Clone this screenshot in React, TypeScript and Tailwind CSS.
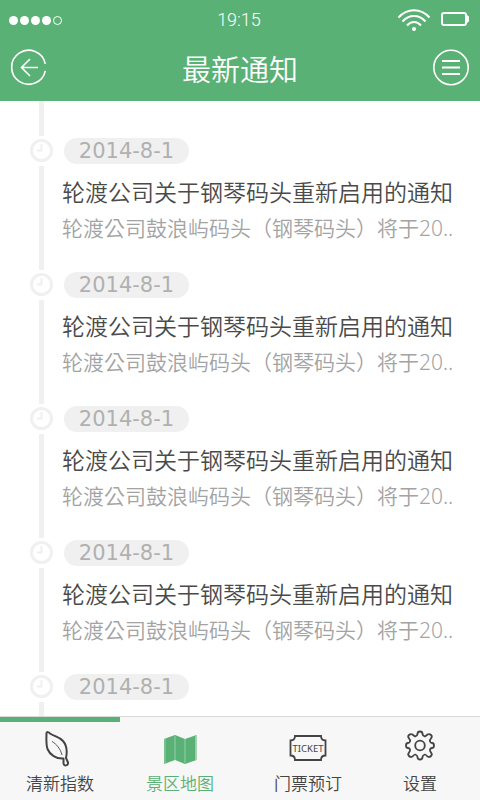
import type { ReactNode } from "react";

type Notice = { id: number; date: string; title?: string; summary?: string };

const title = "轮渡公司关于钢琴码头重新启用的通知";
const summary = "轮渡公司鼓浪屿码头（钢琴码头）将于20..";

const notices: Notice[] = [
  { id: 1, date: "2014-8-1", title, summary },
  { id: 2, date: "2014-8-1", title, summary },
  { id: 3, date: "2014-8-1", title, summary },
  { id: 4, date: "2014-8-1", title, summary },
  { id: 5, date: "2014-8-1" },
];

function StatusBar() {
  return (
    <div className="grid h-10 grid-cols-3 items-center pr-[11px] pl-[9px]">
      <div className="flex gap-[2px]" role="img" aria-label="信号">
        <span className="size-[9px] rounded-full bg-white" />
        <span className="size-[9px] rounded-full bg-white" />
        <span className="size-[9px] rounded-full bg-white" />
        <span className="size-[9px] rounded-full bg-white" />
        <span className="size-[9px] rounded-full border border-white" />
      </div>
      <time className="text-center font-['Roboto',sans-serif] text-lg font-[350]">19:15</time>
      <div className="flex items-center justify-end gap-[10px]">
        <svg width="34" height="24" viewBox="0 0 34 24" fill="none" stroke="currentColor" strokeWidth="2" role="img" aria-label="无线网络">
          <path d="M1.5 9.5C10 -0.3 24 -0.3 32.500 9.500" />
          <path d="M5.500 13.500C12 6 22 6 28.500 13.500" />
          <path d="M10 17.500C14 12.800 20 12.800 24 17.500" />
          <circle cx="17" cy="21" r="2" fill="currentColor" stroke="none" />
        </svg>
        <svg width="28" height="16" viewBox="0 0 28 16" fill="none" role="img" aria-label="电池">
          <rect x="1" y="1" width="24" height="12" rx="2" stroke="currentColor" strokeWidth="2" />
          <path d="M26 3L28 4.500V9.500L26 11Z" fill="currentColor" />
        </svg>
      </div>
    </div>
  );
}

function Header() {
  return (
    <header className="shrink-0 bg-[#5ab175] text-white">
      <StatusBar />
      <div className="flex h-[61px] items-start justify-between px-[10px] pt-[9px]">
        <button type="button" aria-label="返回">
          <svg width="38" height="38" viewBox="0 0 38 38" fill="none" stroke="currentColor" strokeWidth="1.600">
            <path d="M35.300 14.800A17 17 0 1 0 35.300 21.800" />
            <path d="M28 18.500H11.500M20 10L11.500 18.500L20 27" />
          </svg>
        </button>
        <h1 className="text-[29px] leading-[42px] font-[350]">最新通知</h1>
        <button type="button" aria-label="菜单">
          <svg width="38" height="38" viewBox="0 0 38 38" fill="none" stroke="currentColor" strokeWidth="1.600">
            <circle cx="19" cy="18.500" r="17.200" />
            <path d="M10 12H28M10 18.500H28M10 25H28" strokeWidth="2" />
          </svg>
        </button>
      </div>
    </header>
  );
}

function NoticeItem({ notice }: { notice: Notice }) {
  return (
    <li className="flex min-h-[134px] gap-2">
      <div className="flex w-6 shrink-0 flex-col">
        <svg width="24" height="30" viewBox="0 0 24 30" fill="none" stroke="#f0f0f0" aria-hidden="true">
          <circle cx="11.500" cy="14.500" r="10" strokeWidth="3" />
          <path d="M11.500 8V14.500H7" strokeWidth="2" />
        </svg>
        <span className="ml-[9px] w-[5px] grow bg-[#f0f0f0]" />
      </div>
      <article className="min-w-0 grow pt-[2px]">
        <time className="ml-[2px] block w-[125px] rounded-full bg-[#f0f0f0] text-center font-['DejaVu_Sans',sans-serif] text-[21px] leading-[26px] text-[#b0b0b0]">
          {notice.date}
        </time>
        {notice.title && (
          <h2 className="mt-3 text-[23px] leading-8 font-[350] whitespace-nowrap text-[#4a4a4a]">{notice.title}</h2>
        )}
        {notice.summary && (
          <p
            lang="zh-TW"
            className="mt-1 font-['Noto_Sans','Noto_Sans_CJK_TC',sans-serif] text-[21px] leading-8 font-[350] whitespace-nowrap text-[#a3a3a3]"
          >
            {notice.summary}
          </p>
        )}
      </article>
    </li>
  );
}

function Tab({ label, active = false, children }: { label: string; active?: boolean; children: ReactNode }) {
  return (
    <a
      href="#"
      aria-current={active ? "page" : undefined}
      className={`flex flex-col items-center pt-[5px] ${active ? "text-[#5ab175]" : "text-[#444]"}`}
    >
      {children}
      <span className="mt-[5px] text-[17px] leading-6 font-[350]">{label}</span>
    </a>
  );
}

function TabBar() {
  return (
    <nav className="shrink-0 border-t border-[#d9d9d9] bg-[#f7f7f7]">
      <div className="h-[5px] w-1/4 bg-[#5ab175]" />
      <div className="grid h-[78px] grid-cols-[15fr_15fr_17fr_11fr] pr-4">
        <Tab label="清新指数">
          <svg width="38" height="40" viewBox="0 0 38 40" fill="none" stroke="currentColor" aria-hidden="true">
            <path
              d="M5.500 6C6 4.500 7.500 5 9 6.500C13 9.500 18 9.500 22 14C25.500 18 26.500 24 25 31L27 35.500C27.500 39 22.500 39.500 22.500 36L22.500 31.500C15 32 9 28 6.500 22C4.800 17 5.500 11 5.500 6Z"
              strokeWidth="2"
              strokeLinejoin="round"
            />
            <path d="M11 14.500C15.500 17 19.500 22 21 28" strokeWidth="0.900" />
          </svg>
        </Tab>
        <Tab label="景区地图" active>
          <svg width="34" height="40" viewBox="0 0 34 40" aria-hidden="true">
            <path d="M1 12L12 8L22 12L33.500 8V33L22 37L12 33L1 37Z" fill="currentColor" />
            <path d="M2 12V36M12 9V33M22 12V36M32.500 9V33" stroke="#a7d5b4" strokeWidth="0.800" />
          </svg>
        </Tab>
        <Tab label="门票预订">
          <svg width="38" height="40" viewBox="0 0 38 40" fill="none" stroke="currentColor" aria-hidden="true">
            <path d="M6 9H32C32 12 33.500 13.500 36.500 13.500V28.500C33.500 28.500 32 30 32 33H6C6 30 4.500 28.500 1.500 28.500V13.500C4.500 13.500 6 12 6 9Z" strokeWidth="1.800" />
            <text x="19" y="25" textAnchor="middle" fontSize="9.500" fontFamily="Noto Sans, sans-serif" fill="currentColor" stroke="none">
              TICKET
            </text>
          </svg>
        </Tab>
        <Tab label="设置">
          <svg width="34" height="40" viewBox="0 0 34 40" fill="none" stroke="currentColor" strokeWidth="1.800" strokeLinejoin="round" aria-hidden="true">
            <g transform="translate(0 -1)">
              <path d="M14.500 8Q14.500 5.500 17 5.500Q19.500 5.500 19.500 8Q19.800 10 21.800 10.500Q23.500 9.500 24.500 8.500Q26.500 7.500 28 9Q29.500 10.500 28.200 12.200Q26.500 14 27 15.500Q27.500 17 29 17Q31 17 31 19.500Q31 22 29 22Q27.500 22 27 23.500Q26.500 25 28.200 26.800Q29.500 28.500 28 30Q26.500 31.500 24.500 30.500Q23.500 29 21.800 28.500Q19.800 29 19.500 31Q19.500 33.500 17 33.500Q14.500 33.500 14.500 31Q14.200 29 12.200 28.500Q10.500 29 9.500 30.500Q7.500 31.500 6 30Q4.500 28.500 5.800 26.800Q7.500 25 7 23.500Q6.500 22 5 22Q3 22 3 19.500Q3 17 5 17Q6.500 17 7 15.500Q7.500 14 5.800 12.200Q4.500 10.500 6 9Q7.500 7.500 9.500 8.500Q10.500 9.500 12.200 10.500Q14.200 10 14.500 8Z" />
              <circle cx="17" cy="19.500" r="4.800" />
            </g>
          </svg>
        </Tab>
      </div>
    </nav>
  );
}

export default function App() {
  return (
    <div className="flex h-screen flex-col bg-white font-['Noto_Sans','Noto_Sans_CJK_SC',sans-serif]">
      <Header />
      <main className="min-h-0 grow overflow-hidden pl-[30px]">
        <div className="ml-[9px] h-[35px] w-[5px] bg-[#f0f0f0]" />
        <ul>
          {notices.map((notice) => (
            <NoticeItem key={notice.id} notice={notice} />
          ))}
        </ul>
      </main>
      <TabBar />
    </div>
  );
}
